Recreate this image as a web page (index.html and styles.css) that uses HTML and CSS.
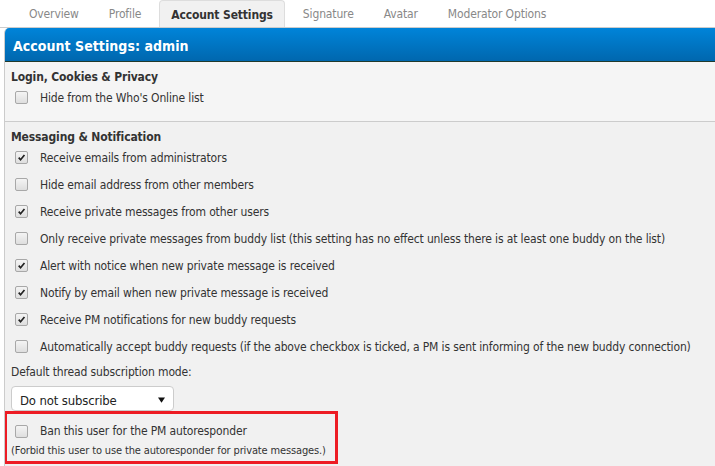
FILE: index.html
```html
<!DOCTYPE html>
<html>
<head>
<meta charset="utf-8">
<link rel="stylesheet" href="styles.css">
</head>
<body>
<ul class="tabs">
  <li class="tab">Overview</li>
  <li class="tab">Profile</li>
  <li class="tab active">Account Settings</li>
  <li class="tab">Signature</li>
  <li class="tab">Avatar</li>
  <li class="tab">Moderator Options</li>
</ul>
<div class="panel">
  <div class="panel-title">Account Settings: admin</div>
  <div class="section first">
    <div class="sec-head">Login, Cookies &amp; Privacy</div>
    <div class="row"><span class="cb"></span><span>Hide from the Who's Online list</span></div>
  </div>
  <div class="section second">
    <div class="sec-head">Messaging &amp; Notification</div>
    <div class="row"><span class="cb on"><svg viewBox="0 0 13 13"><path d="M3.2 6.6 L5.4 9.1 L10 3.6" /></svg></span><span>Receive emails from administrators</span></div>
    <div class="row"><span class="cb"></span><span>Hide email address from other members</span></div>
    <div class="row"><span class="cb on"><svg viewBox="0 0 13 13"><path d="M3.2 6.6 L5.4 9.1 L10 3.6" /></svg></span><span>Receive private messages from other users</span></div>
    <div class="row"><span class="cb"></span><span>Only receive private messages from buddy list (this setting has no effect unless there is at least one buddy on the list)</span></div>
    <div class="row"><span class="cb on"><svg viewBox="0 0 13 13"><path d="M3.2 6.6 L5.4 9.1 L10 3.6" /></svg></span><span>Alert with notice when new private message is received</span></div>
    <div class="row"><span class="cb on"><svg viewBox="0 0 13 13"><path d="M3.2 6.6 L5.4 9.1 L10 3.6" /></svg></span><span>Notify by email when new private message is received</span></div>
    <div class="row"><span class="cb on"><svg viewBox="0 0 13 13"><path d="M3.2 6.6 L5.4 9.1 L10 3.6" /></svg></span><span>Receive PM notifications for new buddy requests</span></div>
    <div class="row"><span class="cb"></span><span>Automatically accept buddy requests (if the above checkbox is ticked, a PM is sent informing of the new buddy connection)</span></div>
    <div class="label">Default thread subscription mode:</div>
    <div class="select"><span>Do not subscribe</span><svg class="arrow" viewBox="0 0 8 6"><path d="M0 0 H8 L4 6 Z" /></svg></div>
    <div class="highlight">
      <div class="row inner"><span class="cb"></span><span>Ban this user for the PM autoresponder</span></div>
      <div class="desc">(Forbid this user to use the autoresponder for private messages.)</div>
    </div>
  </div>
</div>
</body>
</html>
```
FILE: styles.css
```css
html, body {
  margin: 0;
  padding: 0;
  background: #ffffff;
  overflow: hidden;
}
body {
  font-family: "DejaVu Sans Condensed", "DejaVu Sans", sans-serif;
  font-stretch: condensed;
  font-size: 12px;
  letter-spacing: -0.14px;
  color: #333333;
}
.tabs {
  list-style: none;
  margin: 0;
  padding: 0 0 0 17px;
  height: 27px;
  border-bottom: 1px solid #cccccc;
  display: flex;
  gap: 6px;
}
.tab {
  padding: 1px 12px 0 12px;
  line-height: 26px;
  color: #888888;
  height: 27px;
  box-sizing: border-box;
}
.tab.active {
  background: #f1f1f1;
  border: 1px solid #dddddd;
  border-bottom: none;
  border-radius: 4px 4px 0 0;
  color: #333333;
  font-weight: bold;
  padding: 1px 11px 0 11px;
}
.panel {
  margin-left: 4px;
  width: 730px;
  border-left: 1px solid #cccccc;
  border-top-left-radius: 5px;
  overflow: hidden;
}
.panel-title {
  height: 30px;
  padding-top: 3px;
  line-height: 30px;
  background: linear-gradient(#0084d9, #0067ae);
  border-bottom: 1px solid #213a2c;
  color: #ffffff;
  font-weight: bold;
  font-size: 14px;
  letter-spacing: 0.05px;
  padding-left: 8px;
}
.section {
  padding-left: 6px;
}
.section.first {
  background: #f5f5f5;
  border-bottom: 1px solid #cccccc;
  height: 59px;
}
.section.second {
  background: #f1f1f1;
  padding-bottom: 10px;
}
.sec-head {
  font-weight: bold;
  line-height: 14px;
  padding-top: 8px;
}
.first .row {
  height: 27px;
}
.row {
  display: flex;
  align-items: center;
  height: 27px;
  white-space: nowrap;
}
.cb {
  width: 11px;
  height: 11px;
  margin-left: 4px;
  margin-right: 12px;
  border: 1px solid #a8a8a8;
  border-radius: 2px;
  background: linear-gradient(#f4f4f4, #dedede);
  flex: none;
  display: flex;
}
.cb svg {
  width: 11px;
  height: 11px;
  fill: none;
  stroke: #222222;
  stroke-width: 2;
}
.label {
  line-height: 24px;
}
.select {
  width: 163px;
  height: 25px;
  box-sizing: border-box;
  margin-top: 2px;
  background: #ffffff;
  border: 1px solid #cccccc;
  border-radius: 4px;
  display: flex;
  align-items: center;
  justify-content: space-between;
  padding: 3px 8px 0 8px;
  font-size: 13px;
  color: #222222;
}
.arrow {
  width: 7px;
  height: 6px;
  fill: #111111;
}
.highlight {
  margin-left: -7px;
  width: 334px;
  box-sizing: border-box;
  border: 3px solid #ed1c24;
  padding: 7px 0 3px 4px;
}
.row.inner {
  height: 20px;
}
.desc {
  font-size: 11px;
  line-height: 15px;
  padding-top: 2px;
  white-space: nowrap;
}
```
